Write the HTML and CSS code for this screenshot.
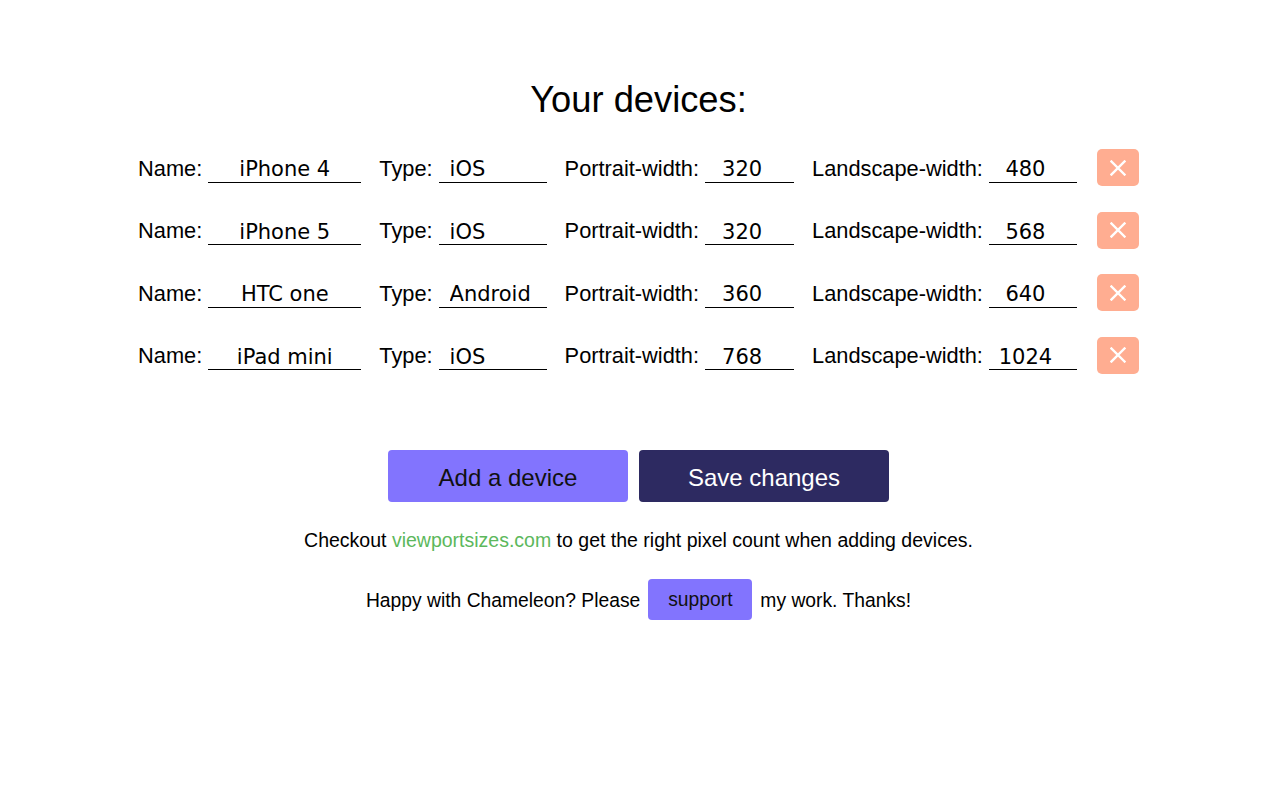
FILE: index.html
```html
<!DOCTYPE html>
<html>
<head>
<meta charset="utf-8">
<title>Chameleon - Your devices</title>
<link rel="stylesheet" href="styles.css">
</head>
<body>
<main class="page">
  <h1 class="title">Your devices:</h1>
  <div class="devices">
    <div class="row">
      <label class="lbl">Name:</label><input class="inp name" value="iPhone 4">
      <label class="lbl">Type:</label><input class="inp type" value="iOS">
      <label class="lbl">Portrait-width:</label><input class="inp num pw" value="320">
      <label class="lbl">Landscape-width:</label><input class="inp num lw" value="480">
      <button class="del" aria-label="Remove"><svg viewBox="0 0 16 16" width="16" height="16"><path d="M1.5 1.5 L14.5 14.5 M14.5 1.5 L1.5 14.5" stroke="#fff" stroke-width="2.4" stroke-linecap="square" fill="none"/></svg></button>
    </div>
    <div class="row">
      <label class="lbl">Name:</label><input class="inp name" value="iPhone 5">
      <label class="lbl">Type:</label><input class="inp type" value="iOS">
      <label class="lbl">Portrait-width:</label><input class="inp num pw" value="320">
      <label class="lbl">Landscape-width:</label><input class="inp num lw" value="568">
      <button class="del" aria-label="Remove"><svg viewBox="0 0 16 16" width="16" height="16"><path d="M1.5 1.5 L14.5 14.5 M14.5 1.5 L1.5 14.5" stroke="#fff" stroke-width="2.4" stroke-linecap="square" fill="none"/></svg></button>
    </div>
    <div class="row">
      <label class="lbl">Name:</label><input class="inp name" value="HTC one">
      <label class="lbl">Type:</label><input class="inp type" value="Android">
      <label class="lbl">Portrait-width:</label><input class="inp num pw" value="360">
      <label class="lbl">Landscape-width:</label><input class="inp num lw" value="640">
      <button class="del" aria-label="Remove"><svg viewBox="0 0 16 16" width="16" height="16"><path d="M1.5 1.5 L14.5 14.5 M14.5 1.5 L1.5 14.5" stroke="#fff" stroke-width="2.4" stroke-linecap="square" fill="none"/></svg></button>
    </div>
    <div class="row">
      <label class="lbl">Name:</label><input class="inp name" value="iPad mini">
      <label class="lbl">Type:</label><input class="inp type" value="iOS">
      <label class="lbl">Portrait-width:</label><input class="inp num pw" value="768">
      <label class="lbl">Landscape-width:</label><input class="inp num lw" value="1024">
      <button class="del" aria-label="Remove"><svg viewBox="0 0 16 16" width="16" height="16"><path d="M1.5 1.5 L14.5 14.5 M14.5 1.5 L1.5 14.5" stroke="#fff" stroke-width="2.4" stroke-linecap="square" fill="none"/></svg></button>
    </div>
  </div>
  <div class="actions">
    <button class="btn add">Add a device</button>
    <button class="btn save">Save changes</button>
  </div>
  <p class="note">Checkout <a class="link" href="#">viewportsizes.com</a> to get the right pixel count when adding devices.</p>
  <p class="thanks"><span>Happy with Chameleon? Please</span><a class="support" href="#">support</a><span>my work. Thanks!</span></p>
</main>
</body>
</html>
```
FILE: styles.css
```css
html, body {
  margin: 0;
  padding: 0;
  background: #fff;
}
body {
  font-family: "Liberation Sans", Arial, Helvetica, sans-serif;
  color: #000;
}
.page {
  display: flex;
  flex-direction: column;
  align-items: center;
  padding-right: 3px;
}
.title {
  margin: 78px 0 0;
  font-size: 36.3px;
  line-height: 44px;
  font-weight: normal;
}
.devices {
  margin-top: 27px;
  display: flex;
  flex-direction: column;
  gap: 25.67px;
}
.row {
  display: flex;
  align-items: center;
  height: 37px;
}
.lbl {
  font-size: 21.8px;
  margin-right: 6px;
  padding-top: 2px;
  white-space: nowrap;
}
.inp {
  box-sizing: border-box;
  height: 30px;
  border: none;
  border-bottom: 1px solid #000;
  background: transparent;
  font-family: "DejaVu Sans", "Lucida Grande", sans-serif;
  font-size: 21px;
  color: #000;
  padding: 4px 0 0;
  margin: 0 18px 0 0;
  outline: none;
}
.name { width: 153px; text-align: center; }
.type { width: 108px; padding-left: 11px; }
.num { text-align: center; padding-right: 15px; }
.pw { width: 89px; }
.lw { width: 88px; margin-right: 20px; }
.del {
  width: 42px;
  height: 37px;
  border: none;
  border-radius: 5px;
  background: #ffad91;
  display: flex;
  align-items: center;
  justify-content: center;
  padding: 0;
  cursor: pointer;
}
.del svg { display: block; }
.actions {
  margin-top: 76px;
  display: flex;
  gap: 11px;
}
.btn {
  height: 52px;
  border: none;
  border-radius: 4px;
  font-family: "Liberation Sans", Arial, sans-serif;
  font-size: 24px;
  padding: 4px 0 0;
  cursor: pointer;
}
.add { width: 240px; background: #8274fe; color: #111; }
.save { width: 250px; background: #2d2a61; color: #fff; }
.note {
  margin: 26px 0 0;
  font-size: 19.5px;
  line-height: 24px;
}
.link {
  color: #5cb85c;
  text-decoration: none;
}
.thanks {
  margin: 27px 0 0;
  font-size: 19.3px;
  display: flex;
  align-items: center;
  gap: 8px;
  height: 41px;
}
.thanks span { padding-top: 3px; }
.support {
  display: flex;
  align-items: center;
  justify-content: center;
  width: 104px;
  height: 41px;
  box-sizing: border-box;
  padding-top: 2px;
  border-radius: 4px;
  background: #8274fe;
  color: #111;
  text-decoration: none;
}
```
